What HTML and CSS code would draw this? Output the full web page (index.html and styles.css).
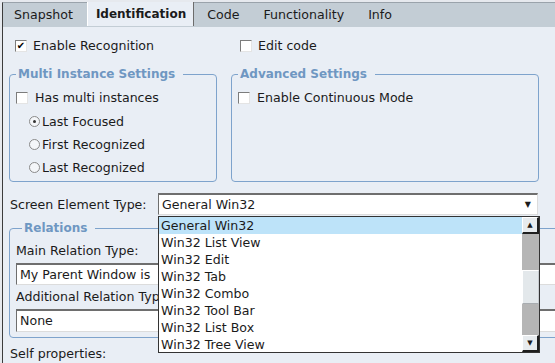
FILE: index.html
```html
<!DOCTYPE html>
<html lang="en">

<head>
    <meta charset="UTF-8">
    <title>Identification</title>
    <link rel="stylesheet" href="styles.css">
</head>

<body>
    <div class="window">
        <div class="tabs">
            <div class="tab">Snapshot</div>
            <div class="tab active">Identification</div>
            <div class="tab">Code</div>
            <div class="tab">Functionality</div>
            <div class="tab">Info</div>
        </div>

        <div class="page">
            <div class="row top-row">
                <label class="check-item wide"><span class="box checked">&#10004;</span>Enable Recognition</label>
                <label class="check-item"><span class="box"></span>Edit code</label>
            </div>

            <div class="groups">
                <fieldset class="group multi">
                    <legend>Multi Instance Settings</legend>
                    <label class="check-item"><span class="box"></span>Has multi instances</label>
                    <div class="radios">
                        <label class="radio-item"><span class="radio on"></span>Last Focused</label>
                        <label class="radio-item"><span class="radio"></span>First Recognized</label>
                        <label class="radio-item"><span class="radio"></span>Last Recognized</label>
                    </div>
                </fieldset>
                <fieldset class="group advanced">
                    <legend>Advanced Settings</legend>
                    <label class="check-item"><span class="box"></span>Enable Continuous Mode</label>
                </fieldset>
            </div>

            <div class="row type-row">
                <span class="type-label">Screen Element Type:</span>
                <div class="select">
                    <span>General Win32</span>
                    <span class="arrow">&#9660;</span>

                    <div class="dropdown">
                        <ul class="options">
                            <li class="selected">General Win32</li>
                            <li>Win32 List View</li>
                            <li>Win32 Edit</li>
                            <li>Win32 Tab</li>
                            <li>Win32 Combo</li>
                            <li>Win32 Tool Bar</li>
                            <li>Win32 List Box</li>
                            <li>Win32 Tree View</li>
                        </ul>
                        <div class="scrollbar">
                            <div class="sb-btn">&#9650;</div>
                            <div class="sb-track">
                                <div class="sb-thumb"></div>
                            </div>
                            <div class="sb-btn">&#9660;</div>
                        </div>
                    </div>
                </div>
            </div>

            <fieldset class="group relations">
                <legend>Relations</legend>
                <div class="field-label">Main Relation Type:</div>
                <div class="input first">My Parent Window is</div>
                <div class="field-label clipped">Additional Relation Type:</div>
                <div class="input second">None</div>
            </fieldset>

            <div class="self-label">Self properties:</div>
        </div>
    </div>
</body>

</html>
```

FILE: styles.css
```css
html,
body {
    margin: 0;
    height: 100%;
    overflow: hidden;
}

body {
    font-family: "DejaVu Sans", Verdana, sans-serif;
    font-size: 12.6px;
    color: #1b1b1b;
    background-color: #e6e9ee;
}

.window {
    margin-left: 2px;
    margin-top: 2px;
    border-left: 1px solid #3c3c3c;
    border-top: 1px solid #9aa3ab;
    height: 100%;
    background-color: #e9eef5;
}

/* tab strip */

.tabs {
    display: flex;
    height: 23px;
    background-color: #c3cdd5;
    border-bottom: 1px solid #c3cdd5;
}

.tab {
    padding: 0 12px;
    line-height: 23px;
}

.tab:first-child {
    padding-left: 11px;
    padding-right: 14px;
}

.tab.active {
    background-color: #e9eef5;
    font-weight: 700;
    font-size: 12px;
    padding: 0 7px 0 8px;
    border-left: 1px solid #ffffff;
    border-right: 1px solid #6c6c6c;
    height: 24px;
    margin-top: -1px;
    margin-right: 1px;
    line-height: 25px;
}

.page {
    padding: 11px 0 0 6px;
}

.row {
    display: flex;
    align-items: center;
}

/* checkboxes and radios */

.check-item,
.radio-item {
    display: flex;
    align-items: center;
}

.check-item.wide {
    width: 225px;
}

.box {
    width: 12px;
    height: 12px;
    box-sizing: border-box;
    border: 1px solid #7c7c7c;
    border-right-color: #e4e4e4;
    border-bottom-color: #e4e4e4;
    background-color: #ffffff;
    margin: 0 6px 0 6px;
    font-size: 10px;
    font-weight: 700;
    line-height: 10px;
    text-align: center;
    color: #000000;
}

.radio {
    width: 11px;
    height: 11px;
    box-sizing: border-box;
    border: 1px solid #8a8a8a;
    border-radius: 50%;
    background-color: #f4f6f9;
    margin-right: 2px;
    position: relative;
}

.radio.on::after {
    content: "";
    position: absolute;
    left: 3px;
    top: 3px;
    width: 3px;
    height: 3px;
    border-radius: 50%;
    background-color: #333333;
}

.top-row {
    height: 15px;
}

/* group boxes */

.groups {
    display: flex;
    gap: 14px;
    margin-top: 14px;
}

.group {
    margin: 0;
    border: 1px solid #7ea3cc;
    border-radius: 4px;
    padding: 9px 0 0 0;
    box-sizing: border-box;
}

.group legend {
    color: #6f97c2;
    font-weight: 700;
    font-size: 12px;
    padding: 0 8px 0 2px;
    margin-left: 6px;
}

.multi {
    width: 208px;
    height: 115px;
}

.advanced {
    width: 308px;
    height: 115px;
}

.multi .check-item .box,
.advanced .check-item .box {
    margin-left: 6px;
    margin-right: 7px;
}

.radios {
    display: flex;
    flex-direction: column;
    gap: 8px;
    margin-top: 9px;
    padding-left: 19px;
}

.radio-item {
    height: 15px;
}

/* screen element type */

.type-row {
    margin-top: 11px;
    height: 22px;
}

.type-label {
    width: 149px;
    padding-left: 1px;
    box-sizing: border-box;
}

.select {
    position: relative;
    width: 380px;
    height: 22px;
    box-sizing: border-box;
    background-color: #ffffff;
    border-top: 2px solid #6e6e6e;
    border-left: 1px solid #6e6e6e;
    border-right: 1px solid #dcdcdc;
    border-bottom: 1px solid #dcdcdc;
    display: flex;
    align-items: center;
    justify-content: space-between;
    padding: 0 6px 0 3px;
}

.arrow {
    font-size: 8px;
}

.dropdown {
    position: absolute;
    left: -1px;
    top: 21px;
    width: 382px;
    height: 137px;
    box-sizing: border-box;
    border: 1px solid #333333;
    background-color: #ffffff;
    display: flex;
    z-index: 2;
}

.options {
    flex: 1;
    list-style: none;
    margin: 0;
    padding: 0;
}

.options li {
    height: 17px;
    line-height: 17px;
    padding-left: 2px;
}

.options li.selected {
    background-color: #bde3f9;
}

.scrollbar {
    width: 17px;
    display: flex;
    flex-direction: column;
    background-color: #b5b5b5;
}

.sb-btn {
    height: 17px;
    box-sizing: border-box;
    background-color: #e7ebee;
    border: 1px solid #ffffff;
    border-right: 2px solid #1e1e1e;
    border-bottom: 2px solid #1e1e1e;
    font-size: 7px;
    line-height: 14px;
    text-align: center;
}

.sb-track {
    flex: 1;
    padding-top: 36px;
}

.sb-thumb {
    height: 34px;
    box-sizing: border-box;
    background-color: #e3e8eb;
    border: 1px solid #ffffff;
    border-right-color: #c8ccd0;
    border-bottom-color: #a8acb0;
}

/* relations */

.relations {
    width: 560px;
    height: 117px;
    margin-top: 6px;
    padding: 5px 0 0 6px;
}

.field-label {
    margin-top: 2px;
    height: 18px;
    line-height: 18px;
}

.field-label.clipped {
    width: 142px;
    white-space: nowrap;
    overflow: hidden;
}

.input {
    height: 22px;
    box-sizing: border-box;
    background-color: #ffffff;
    border-top: 2px solid #6e6e6e;
    border-left: 1px solid #6e6e6e;
    border-bottom: 1px solid #dcdcdc;
    padding-left: 3px;
    line-height: 20px;
}

.input.first {
    margin: 3px 0 3px 0;
}

.input.second {
    height: 23px;
    margin-top: 3px;
}

.self-label {
    margin-top: 8px;
    padding-left: 1px;
}
```
